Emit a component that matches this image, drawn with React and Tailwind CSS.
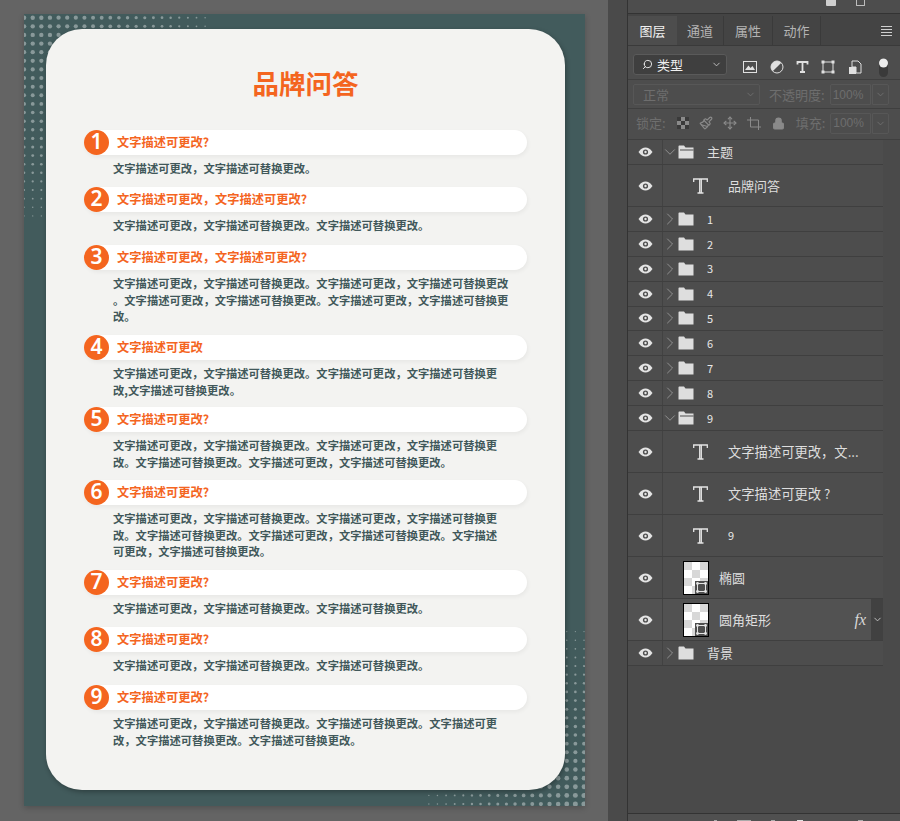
import { ChevronDown, ChevronRight, Search, Move, Lock, Paintbrush } from 'lucide-react'

const cjk = { fontFamily: '"Noto Sans CJK SC", sans-serif' }

const L1 = '文字描述可更改，文字描述可替换更改。文字描述可更改，文字描述可替换更'

const faq = [
  { n: 1, q: '文字描述可更改?', h: 'h-[57px]', a: ['文字描述可更改，文字描述可替换更改。'] },
  { n: 2, q: '文字描述可更改，文字描述可更改?', h: 'h-[58px]', a: ['文字描述可更改，文字描述可替换更改。文字描述可替换更改。'] },
  { n: 3, q: '文字描述可更改，文字描述可更改?', h: 'h-[90px]', a: [L1 + '改', '。文字描述可更改，文字描述可替换更改。文字描述可更改，文字描述可替换更', '改。'] },
  { n: 4, q: '文字描述可更改', h: 'h-[72px]', a: [L1, '改,文字描述可替换更改。'] },
  { n: 5, q: '文字描述可更改?', h: 'h-[73px]', a: [L1, '改。文字描述可替换更改。文字描述可更改，文字描述可替换更改。'] },
  { n: 6, q: '文字描述可更改?', h: 'h-[90px]', a: [L1, '改。文字描述可替换更改。文字描述可更改，文字描述可替换更改。文字描述', '可更改，文字描述可替换更改。'] },
  { n: 7, q: '文字描述可更改?', h: 'h-[57px]', a: ['文字描述可更改，文字描述可替换更改。文字描述可替换更改。'] },
  { n: 8, q: '文字描述可更改?', h: 'h-[58px]', a: ['文字描述可更改，文字描述可替换更改。文字描述可替换更改。'] },
  { n: 9, q: '文字描述可更改?', h: 'h-[73px]', a: ['文字描述可更改，文字描述可替换更改。文字描述可替换更改。文字描述可更', '改，文字描述可替换更改。文字描述可替换更改。'] },
]

// halftone dots, corners of the poster
function Halftone() {
  const dots = []
  const pitch = 8.62
  for (let i = 0; i < 22; i++) {
    for (let j = 0; j < 24; j++) {
      const x = 0.1 + i * pitch
      const y = 3.7 + j * pitch
      const d = Math.max(x / 190, y / 205)
      if (d <= 1.02) dots.push([x, y, 2.2 - 1.6 * d * d])
    }
  }
  for (let i = 0; i < 19; i++) {
    for (let j = 0; j < 22; j++) {
      const x = 560 - i * pitch
      const y = 790 - j * pitch
      const d = Math.max((560 - x) / 158, (790 - y) / 176)
      if (d <= 1) dots.push([x, y, 2.6 - 2 * d])
    }
  }
  return (
    <svg width="561" height="792" className="absolute left-0 top-0">
      {dots.map(([x, y, r], i) => (
        <circle key={i} cx={x} cy={y} r={r} fill="#ffffff" fillOpacity="0.38" />
      ))}
    </svg>
  )
}

function Eye() {
  return (
    <svg width="15" height="10" viewBox="0 0 15 10">
      <path d="M0.5 5C3 1.6 5 0.5 7.5 0.5S12 1.6 14.5 5C12 8.4 10 9.5 7.5 9.5S3 8.4 0.5 5Z" fill="#e4e4e4" />
      <circle cx="7.5" cy="5" r="2.6" fill="#4d4d4d" />
      <circle cx="7.5" cy="5" r="1.2" fill="#e4e4e4" />
    </svg>
  )
}

function Folder({ open }) {
  return (
    <svg width="16" height="14" viewBox="0 0 16 14">
      <path d="M0.5 1.5C0.5 0.9 0.9 0.5 1.5 0.5H6L7.5 2.5H15.5V13.5H0.5Z" fill="#dedede" />
      {open && <path d="M2 5H15.5" stroke="#4d4d4d" strokeWidth="1" />}
    </svg>
  )
}

function TypeIcon() {
  return (
    <svg width="15" height="16" viewBox="0 0 15 16" fill="none" stroke="#e4e4e4" strokeWidth="1.3">
      <path d="M0.7 4V1H14.3V4M6.7 1V14.5M8.3 1V14.5M4.5 15H10.5" />
    </svg>
  )
}

function Thumb() {
  const cells = []
  for (let r = 0; r < 4; r++) {
    for (let c = 0; c < 3; c++) {
      if ((r + c) % 2 === 0) cells.push([c, r])
    }
  }
  return (
    <div className="relative h-[34px] w-[26px] border border-black bg-white">
      <svg width="24" height="32" className="absolute left-0 top-0">
        {cells.map(([c, r]) => (
          <rect key={`${c}-${r}`} x={c * 8} y={r * 8} width="8" height="8" fill="#d8d8d8" />
        ))}
        <rect x="11" y="19" width="13" height="13" fill="#4d4d4d" />
        <rect x="13.5" y="21.5" width="8" height="8" fill="none" stroke="#e4e4e4" />
        {[[13.5, 21.5], [21.5, 21.5], [13.5, 29.5], [21.5, 29.5]].map(([x, y]) => (
          <circle key={`${x}-${y}`} cx={x} cy={y} r="1.4" fill="#e4e4e4" />
        ))}
      </svg>
    </div>
  )
}

function FolderRow({ name, open, digit, tall }) {
  return (
    <div className={tall ? 'flex h-[25px] border-b border-[#3f3f3f] bg-[#4d4d4d]' : 'flex h-[24.875px] border-b border-[#3f3f3f] bg-[#4d4d4d]'}>
      <div className="flex w-[35px] shrink-0 items-center justify-center border-r border-[#424242]"><Eye /></div>
      <div className="flex w-[14px] items-center justify-center">
        {open
          ? <ChevronDown size={18} color="#bdbdbd" strokeWidth={0.8} className="shrink-0" />
          : <ChevronRight size={20} color="#bdbdbd" strokeWidth={0.7} className="shrink-0" />}
      </div>
      <div className="ml-[1px] flex items-center"><Folder open={open} /></div>
      <span className={digit ? 'ml-[13px] self-center text-[11px] text-[#e8e8e8]' : 'ml-[13px] self-center text-[13px] text-[#dedede]'}>{name}</span>
    </div>
  )
}

function TextRow({ name, small }) {
  let nameClass = 'text-[13px] text-[#dedede]'
  if (small) nameClass = 'text-[11px] text-[#e8e8e8]'
  else if (name.length > 4) nameClass = 'text-[13.3px] text-[#dedede]'
  return (
    <div className="flex h-[42px] items-center border-b border-[#3f3f3f] bg-[#4d4d4d]">
      <div className="flex h-full w-[35px] shrink-0 items-center justify-center border-r border-[#424242]"><Eye /></div>
      <div className="ml-[30px] w-[35px]"><TypeIcon /></div>
      <span className={nameClass}>{name}</span>
    </div>
  )
}

function ShapeRow({ name, fx }) {
  return (
    <div className={fx ? 'flex h-[42px] items-center border-b border-[#3f3f3f] bg-[#525252]' : 'flex h-[42px] items-center border-b border-[#3f3f3f] bg-[#4d4d4d]'}>
      <div className="flex h-full w-[35px] shrink-0 items-center justify-center border-r border-[#424242]"><Eye /></div>
      <div className="ml-[20px] mr-[10px]"><Thumb /></div>
      <span className="flex-1 text-[13px] text-[#dedede]">{name}</span>
      {fx && <span className="mr-[5px] text-[16px] italic text-[#d8d8d8]" style={{ fontFamily: '"Liberation Serif", serif' }}>fx</span>}
      {fx && <div className="flex h-full w-[12px] items-center justify-center bg-[#414141]"><ChevronDown size={11} color="#c8c8c8" /></div>}
    </div>
  )
}

function PercentBox() {
  return (
    <div className="ml-[5px] flex h-[21px] gap-[1px] text-[12px]" style={{ fontFamily: '"Liberation Sans", sans-serif' }}>
      <div className="flex w-[41px] items-center rounded-l-[2px] border border-[#575757] pl-[2px]">100%</div>
      <div className="flex w-[17px] items-center justify-center rounded-r-[2px] border border-[#575757]"><ChevronDown size={11} /></div>
    </div>
  )
}

function LayersPanel() {
  return (
    <div className="flex w-[272px] shrink-0 flex-col bg-[#4d4d4d] text-[#dedede]" style={cjk}>
      <div className="flex h-[14px] items-end border-b border-[#333333] pb-[7px]">
        <div className="ml-[198px] h-[6px] w-[10px] rounded-b-[1px] bg-[#cfcfcf]" />
        <div className="ml-[20px] h-[6px] w-[9px] rounded-b-[1px] border border-t-0 border-[#bdbdbd]" />
      </div>
      <div className="flex h-[32px] items-stretch border-b border-[#3a3a3a] bg-[#444444] pt-[2px]">
        <div className="flex w-[49px] items-center justify-center bg-[#4d4d4d] text-[13px] text-[#f0f0f0]">图层</div>
        <div className="flex w-[47px] items-center justify-center border-r border-[#3a3a3a] text-[13px] text-[#b4b4b4]">通道</div>
        <div className="flex w-[49px] items-center justify-center border-r border-[#3a3a3a] text-[13px] text-[#b4b4b4]">属性</div>
        <div className="flex w-[48px] items-center justify-center border-r border-[#3a3a3a] text-[13px] text-[#b4b4b4]">动作</div>
        <div className="ml-auto mr-[8px] flex flex-col justify-center gap-[2px]">
          {[0, 1, 2, 3].map((i) => <div key={i} className="h-[1px] w-[11px] bg-[#cfcfcf]" />)}
        </div>
      </div>
      <div className="flex h-[34px] items-center border-b border-[#3f3f3f] pl-[5px] pt-[4px]">
        <div className="flex h-[21px] w-[94px] items-center rounded-[3px] border border-[#5a5a5a] bg-[#3f3f3f] pl-[8px] text-[13px] text-[#f0f0f0]">
          <Search size={11} strokeWidth={2} className="mr-[4px] -scale-x-100" />
          类型
          <ChevronDown size={11} className="ml-auto mr-[4px]" color="#c4c4c4" />
        </div>
        <svg width="160" height="30" viewBox="0 0 160 30" className="ml-[13px]">
          <rect x="3.5" y="11.5" width="13" height="11" fill="none" stroke="#e0e0e0" />
          <path d="M5 20L8.5 15.5L10.5 18L12.5 16L15 20Z" fill="#e0e0e0" />
          <circle cx="37" cy="17" r="6" fill="none" stroke="#e0e0e0" />
          <path d="M37 17L41.3 12.8A6 6 0 0 0 32.7 21.2Z" fill="#e0e0e0" />
          <path d="M57.5 14.5V12H67.5V14.5M62.5 12V22M60 22H65" fill="none" stroke="#e0e0e0" strokeWidth="1.8" />
          <rect x="83" y="12" width="10" height="10" fill="none" stroke="#e0e0e0" />
          {[[83, 12], [93, 12], [83, 22], [93, 22]].map(([x, y]) => (
            <rect key={`${x}-${y}`} x={x - 1.5} y={y - 1.5} width="3" height="3" fill="#e0e0e0" />
          ))}
          <path d="M112 11H118L121 14V23H116V17H112Z" fill="none" stroke="#e0e0e0" />
          <rect x="109" y="17" width="7" height="7" fill="#e0e0e0" />
          <rect x="139" y="8" width="9" height="19" rx="4.5" fill="#3a3a3a" />
          <circle cx="143.5" cy="13" r="4.5" fill="#ececec" />
        </svg>
      </div>
      <div className="flex h-[29px] items-center border-b border-[#3f3f3f] pl-[5px] pt-[1px] text-[#6e6e6e]">
        <div className="flex h-[21px] w-[127px] items-center rounded-[2px] border border-[#575757] pl-[9px] text-[13px]">
          正常
          <ChevronDown size={11} className="ml-auto mr-[3px]" />
        </div>
        <span className="ml-[9px] text-[13px]">不透明度:</span>
        <PercentBox />
      </div>
      <div className="flex h-[31px] items-center border-b border-[#3f3f3f] pb-[2px] pl-[8px] text-[#6e6e6e]">
        <span className="text-[13px]">锁定:</span>
        <svg width="12" height="12" viewBox="0 0 12 12" className="ml-[11px]">
          <rect width="12" height="12" fill="#8a8a8a" />
          <path d="M0 0H4V4H0ZM8 0H12V4H8ZM4 4H8V8H4ZM0 8H4V12H0ZM8 8H12V12H8Z" fill="#3a3a3a" />
        </svg>
        <Paintbrush size={14} className="ml-[10px]" color="#8a8a8a" />
        <Move size={14} className="ml-[10px]" color="#8a8a8a" />
        <svg width="15" height="13" viewBox="0 0 15 13" className="ml-[10px]" fill="none" stroke="#8a8a8a">
          <path d="M3.5 0V10H14M0 3H11.5V13" />
        </svg>
        <Lock size={13} className="ml-[10px]" color="#8a8a8a" fill="#8a8a8a" />
        <span className="ml-[11px] text-[13px]">填充:</span>
        <PercentBox />
      </div>
      <div className="flex flex-1 flex-col bg-[#4a4a4a]">
        <div className="w-[255px]">
          <FolderRow name="主题" open tall />
          <TextRow name="品牌问答" />
          {['1', '2', '3', '4', '5', '6', '7', '8'].map((n) => <FolderRow key={n} name={n} digit />)}
          <FolderRow name="9" open digit tall />
          <TextRow name="文字描述可更改，文..." />
          <TextRow name="文字描述可更改 ?" />
          <TextRow name="9" small />
          <ShapeRow name="椭圆" />
          <ShapeRow name="圆角矩形" fx />
          <FolderRow name="背景" tall />
        </div>
      </div>
      <div className="flex h-[8px] border-t border-[#333333] bg-[#505050]">
        <div className="ml-[86px] mt-[6px] h-[2px] w-[3px] bg-[#aaaaaa]" />
        <div className="ml-[20px] mt-[6px] h-[2px] w-[14px] bg-[#aaaaaa]" />
        <div className="ml-[20px] mt-[6px] h-[2px] w-[4px] bg-[#aaaaaa]" />
        <div className="ml-[22px] mt-[6px] h-[2px] w-[6px] bg-[#e0e0e0]" />
        <div className="ml-[55px] mt-[6px] h-[2px] w-[5px] bg-[#aaaaaa]" />
      </div>
    </div>
  )
}

export default function App() {
  return (
    <div className="flex h-[821px] w-[900px] overflow-hidden bg-[#646464]" style={cjk}>
      <div className="w-[608px] shrink-0 pl-[24px] pt-[14px]">
        <div className="relative h-[792px] w-[561px] overflow-hidden bg-[#425b5c] shadow-[0_2px_6px_rgba(0,0,0,0.2)]">
          <Halftone />
          <div className="relative ml-[22px] mt-[15px] h-[761px] w-[519px] rounded-[36px] bg-[#f3f3f1] pl-[38px] shadow-[1px_2px_5px_rgba(0,0,0,0.3)]">
            <h1 className="pt-[34px] pr-[38px] text-center text-[26.5px] font-bold leading-[40px] text-[#f4651f]">品牌问答</h1>
            <div className="mt-[27px]">
              {faq.map((item) => (
                <div key={item.n} className={item.h}>
                  <div className="relative flex h-[25px] w-[443px] items-center rounded-full bg-white shadow-[1px_2px_4px_rgba(0,0,0,0.05)]">
                    <div className="flex h-[25px] w-[25px] items-center justify-center rounded-full bg-[#f4651f] pb-[1px] text-[21px] font-semibold text-white" style={{ fontFamily: '"Noto Sans", sans-serif' }}>{item.n}</div>
                    <span className="mb-[1px] ml-[8px] text-[12.25px] font-bold text-[#f4651f]">{item.q}</span>
                  </div>
                  <div className="mt-[5px] pl-[29px] text-[11.3px] font-bold leading-[16.67px] text-[#41585a]">
                    {item.a.map((line, i) => <div key={i} className="whitespace-nowrap">{line}</div>)}
                  </div>
                </div>
              ))}
            </div>
          </div>
        </div>
      </div>
      <div className="w-[20px] shrink-0 border-r border-[#333333] bg-[#4a4a4a]" />
      <LayersPanel />
    </div>
  )
}
